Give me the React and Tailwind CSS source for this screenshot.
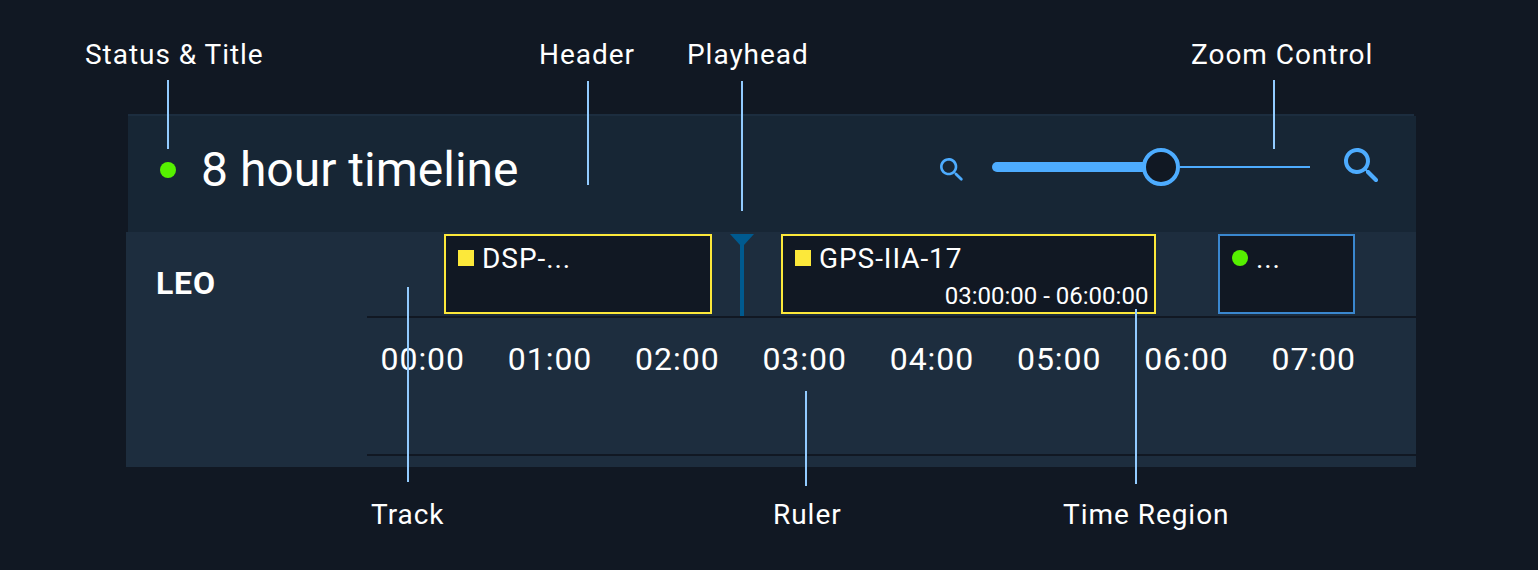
const LEADERS = [
  "left-[167px] top-[80px] h-[69px]",
  "left-[587px] top-[80.6px] h-[104.4px]",
  "left-[741px] top-[81px] h-[130px]",
  "left-[1273px] top-[80px] h-[69px]",
  "left-[407px] top-[287px] h-[195px]",
  "left-[805px] top-[390.6px] h-[95.4px]",
  "left-[1135px] top-[308.6px] h-[175px]",
];

const HOURS = ["00:00", "01:00", "02:00", "03:00", "04:00", "05:00", "06:00", "07:00"];

function SearchIcon({ className }) {
  return (
    <svg viewBox="0 0 24 24" fill="currentColor" className={className}>
      <path d="M15.5 14h-.79l-.28-.27c1.2-1.4 1.82-3.31 1.48-5.34-.47-2.78-2.79-5-5.59-5.34a6.505 6.505 0 0 0-7.27 7.27c.34 2.8 2.56 5.12 5.34 5.59 2.03.34 3.94-.28 5.34-1.48l.27.28v.79l4.25 4.25c.41.41 1.08.41 1.49 0 .41-.41.41-1.08 0-1.49L15.5 14zm-6 0C7.01 14 5 11.99 5 9.5S7.01 5 9.5 5 14 7.01 14 9.5 11.99 14 9.5 14z" />
    </svg>
  );
}

function Label({ className = "", children }) {
  return (
    <span className={`shrink-0 whitespace-nowrap text-[28px] leading-8 tracking-[0.96px] ${className}`}>
      {children}
    </span>
  );
}

function Region({ className, marker, title, time }) {
  return (
    <div className={`flex h-20 shrink-0 flex-col border-2 bg-[#111823] pl-3 pr-1.5 pt-[7px] ${className}`}>
      <div className="flex items-start gap-2">
        <span className={`mt-[7px] size-4 shrink-0 ${marker}`} />
        <span className="whitespace-nowrap text-[28px] leading-8 tracking-[0.94px]">{title}</span>
      </div>
      {time && (
        <span className="mt-[5px] self-end whitespace-nowrap text-2xl leading-8">{time}</span>
      )}
    </div>
  );
}

function Header() {
  return (
    <header className="ml-0.5 flex h-[118px] items-start bg-[#172635]">
      <div className="flex w-full flex-col">
        <div className="flex h-0.5">
          <div className="flex-1 bg-[#1c2d3f]" />
          <div className="w-0.5 bg-[#111823]" />
        </div>
        <div className="flex items-start pl-8">
          <span className="mt-[46px] size-4 shrink-0 rounded-full bg-[#56f000]" />
          <h1 className="ml-[25px] mt-[26px] w-[741px] shrink-0 whitespace-nowrap text-5xl leading-[56px]">
            8 hour timeline
          </h1>
          <SearchIcon className="-ml-1.5 mt-[38px] size-8 shrink-0 text-[#4dacff]" />
          <div className="ml-6 mt-8 flex h-[38px] w-[318px] shrink-0 items-center">
            <div className="-mr-1 h-2.5 w-[154.3px] rounded-l-full bg-[#4dacff]" />
            <div className="size-[38px] shrink-0 rounded-full border-4 border-[#4dacff] bg-[#111823]" />
            <div className="h-0.5 flex-1 bg-[#4dacff]" />
          </div>
          <SearchIcon className="ml-7 mt-[26px] size-12 shrink-0 text-[#4dacff]" />
        </div>
      </div>
    </header>
  );
}

function Timeline() {
  return (
    <section className="flex h-[235px] bg-[#1d2d3e]">
      <div className="w-[241px] shrink-0 pl-[30px] pt-8 text-[32px] font-bold leading-[38px] tracking-[0.8px]">LEO</div>
      <div className="flex flex-1 flex-col">
        <div className="flex h-[86px] items-start border-b-2 border-[#111823] pl-[77px] pt-0.5">
          <Region className="w-[268.4px] border-[#fce83a]" marker="bg-[#fce83a]" title="DSP-..." />
          <svg viewBox="0 0 24 82" className="ml-[17.6px] h-[82px] w-6 shrink-0" fill="#005a8f">
            <path d="M0 0H24L14 11V82H10V11Z" />
          </svg>
          <Region
            className="ml-[27px] w-[375.4px] border-[#fce83a]"
            marker="bg-[#fce83a]"
            title="GPS-IIA-17"
            time="03:00:00 - 06:00:00"
          />
          <Region
            className="ml-[61.6px] w-[137px] border-[#3a87cf]"
            marker="rounded-full bg-[#56f000]"
            title="..."
          />
        </div>
        <div className="flex h-[138px] border-b-2 border-[#111823] pl-[12.5px] pt-[22px]">
          {HOURS.map((hour) => (
            <span key={hour} className="w-[127.3px] shrink-0 whitespace-nowrap pl-px text-[32px] leading-[38px] tracking-[0.96px]">
              {hour}
            </span>
          ))}
        </div>
      </div>
    </section>
  );
}

export default function App() {
  return (
    <main className="relative h-[570px] w-[1538px] overflow-hidden bg-[#111823] font-['Roboto',sans-serif] text-white">
      <div className="flex h-[114px] pl-[85px] pt-[39px]">
        <Label className="w-[454px]">Status &amp; Title</Label>
        <Label className="w-[148px]">Header</Label>
        <Label className="w-[504px]">Playhead</Label>
        <Label>Zoom Control</Label>
      </div>
      <div className="ml-[126px] w-[1290px]">
        <Header />
        <Timeline />
      </div>
      <div className="flex pl-[371px] pt-8">
        <Label className="w-[402px]">Track</Label>
        <Label className="w-[290px]">Ruler</Label>
        <Label>Time Region</Label>
      </div>
      {LEADERS.map((position) => (
        <div key={position} className={`absolute w-0.5 bg-[#92cbff] ${position}`} />
      ))}
    </main>
  );
}
